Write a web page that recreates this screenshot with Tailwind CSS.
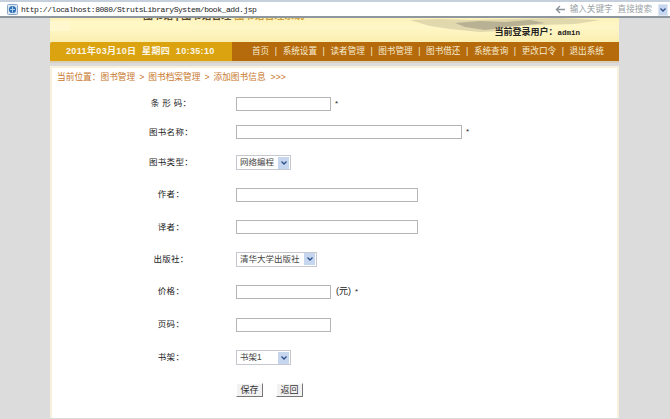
<!doctype html>
<html lang="zh">
<head>
<meta charset="UTF-8" />
<script src="https://cdn.jsdelivr.net/npm/@tailwindcss/browser@4"></script>
<title>book_add.jsp</title>
</head>
<body class="w-[670px] h-[419px] overflow-hidden bg-[#dcdcdc] font-['Liberation_Sans','Noto_Sans_CJK_SC',sans-serif] text-[8px] text-[#222]">
    <!-- address bar -->
    <div class="h-[18px] flex items-center pt-[1px] bg-white border-t-2 border-t-[#c5d0dc] border-b-2 border-b-[#8e979e]">
        <svg class="ml-[7px] w-[11px] h-[11px]" viewBox="0 0 11 11">
            <rect x="0.5" y="0.5" width="10" height="10" rx="1" fill="#dbe7f5" stroke="#8aa5c8"/>
            <circle cx="5.5" cy="5.5" r="3.6" fill="#2f6fb5"/>
            <path d="M3 5.5h5M5.5 2.5v6" stroke="#a9d0ee" stroke-width="1"/>
        </svg>
        <span class="ml-[3px] font-['Liberation_Mono',monospace] text-[8px] text-[#222] tracking-[-0.44px]">http://localhost:8080/StrutsLibrarySystem/book_add.jsp</span>
        <svg class="ml-auto w-[10px] h-[9px]" viewBox="0 0 10 9" fill="none" stroke="#8c949c" stroke-width="1.4">
            <path d="M5 1 1.5 4.5 5 8M1.5 4.5H10"/>
        </svg>
        <span class="ml-[5px] text-[8.6px] text-[#999fa6]">输入关键字</span>
        <span class="ml-[5px] text-[8.6px] text-[#999fa6]">直接搜索</span>
        <span class="ml-[6px] mr-[2px] w-[10px] h-[12px] bg-[#c5d6ee] border border-[#dfe7f2] flex items-center justify-center">
            <svg class="w-[6px] h-[4px]" viewBox="0 0 6 4" fill="none" stroke="#2d4f8a" stroke-width="1.3"><path d="M.5.5 3 3 5.5.5"/></svg>
        </span>
    </div>

    <div class="mx-[50px] w-[569px]">
        <!-- banner -->
        <div class="relative h-[24px] overflow-hidden bg-[linear-gradient(180deg,#fdf3bd_0%,#fef6c6_40%,#fbeeb0_100%)]">
            <div class="absolute left-0 top-[3px] w-[20px] h-[10px] bg-[#fff8cf]"></div>
            <div class="absolute left-[20px] top-[3px] w-[120px] h-[7px] bg-[#fff7c4]"></div>
            <svg class="absolute left-[360px] top-0 w-[209px] h-[20px]" viewBox="0 0 209 20">
                <path d="M0 2 30 1 60 2 100 1 150 0 190 2 165 6 130 7 95 8 90 13 70 14 40 11 20 8Z" fill="#cfc4a0" opacity="0.6"/>
                <path d="M45 5 70 3 95 4 120 2 135 5 100 9 75 12 55 9Z" fill="#8f8a78" opacity="0.5"/>
            </svg>
            <div class="absolute left-[93px] top-[-7px] text-[10px] leading-[10px] font-bold text-[#5a4a2a] whitespace-nowrap">图书馆 | 图书馆管理 <span class="text-[#cfa03c]">图书馆管理系统</span></div>
            <div class="absolute right-[39px] top-[8px] text-[9px] font-bold text-[#222] whitespace-nowrap">当前登录用户：<span class="font-['Liberation_Mono',monospace] text-[7.5px]">admin</span></div>
        </div>
        <!-- nav -->
        <div class="h-[21px] flex text-[#f7ecd0] border-b-2 border-b-[#d8d0bd]">
            <div class="w-[182px] bg-[#daa30f] rounded-tl-[2px] pl-[16px] flex items-center text-[9px] font-bold text-white/90 tracking-[0.35px] whitespace-nowrap">2011年03月10日&nbsp; 星期四&nbsp; 10:35:10</div>
            <div class="flex-1 bg-[#b56a0c] pl-[20px] flex items-center gap-[5.6px] text-[8.6px] whitespace-nowrap">
                <span>首页</span><span>|</span><span>系统设置</span><span>|</span><span>读者管理</span><span>|</span><span>图书管理</span><span>|</span><span>图书借还</span><span>|</span><span>系统查询</span><span>|</span><span>更改口令</span><span>|</span><span>退出系统</span>
            </div>
        </div>
        <!-- content -->
        <div class="mt-[3px] h-[352px] bg-white border-l-2 border-r-2 border-t-2 border-[#f7f0dc] pt-[3px]">
            <div class="h-[14px] pl-[5px] flex items-center gap-[4px] text-[8.7px] text-[#c9772c]">
                <span>当前位置：图书管理</span><span>&gt;</span><span>图书档案管理</span><span>&gt;</span><span>添加图书信息</span><span class="ml-[1px]">&gt;&gt;&gt;</span>
            </div>
            <div class="pt-[5px] flex flex-col">
                <div class="h-[27px] flex items-center">
                    <div class="w-[98px] ml-[70px] text-center text-[8.5px] tracking-[0.3px]">条 形 码：</div>
                    <input class="ml-[16px] w-[95px] h-[14px] bg-white border border-[#b5b5b5]" /><span class="ml-[4px]">*</span>
                </div>
                <div class="h-[30px] flex items-center">
                    <div class="w-[98px] ml-[70px] text-center text-[8.5px] tracking-[0.3px]">图书名称：</div>
                    <input class="ml-[16px] w-[226px] h-[14px] bg-white border border-[#b5b5b5]" /><span class="ml-[4px]">*</span>
                </div>
                <div class="h-[31px] flex items-center">
                    <div class="w-[98px] ml-[70px] text-center text-[8.5px] tracking-[0.3px]">图书类型：</div>
                    <div class="ml-[16px] w-[55px] h-[15px] flex items-center justify-between bg-white border border-[#c5c9cf] pl-[3px] pr-[1px]">
                        <span class="text-[8.5px] text-[#444] whitespace-nowrap">网络编程</span>
                        <span class="w-[11px] h-[12px] bg-[#c5d6ee] flex items-center justify-center"><svg class="w-[6px] h-[4px]" viewBox="0 0 6 4" fill="none" stroke="#2d4f8a" stroke-width="1.3"><path d="M.5.5 3 3 5.5.5"/></svg></span>
                    </div>
                </div>
                <div class="h-[33px] flex items-center">
                    <div class="w-[98px] ml-[70px] text-center text-[8.5px] tracking-[0.3px]">作者：</div>
                    <input class="ml-[16px] w-[182px] h-[14px] bg-white border border-[#b5b5b5]" />
                </div>
                <div class="h-[32px] flex items-center">
                    <div class="w-[98px] ml-[70px] text-center text-[8.5px] tracking-[0.3px]">译者：</div>
                    <input class="ml-[16px] w-[182px] h-[14px] bg-white border border-[#b5b5b5]" />
                </div>
                <div class="h-[32px] flex items-center">
                    <div class="w-[98px] ml-[70px] text-center text-[8.5px] tracking-[0.3px]">出版社：</div>
                    <div class="ml-[16px] w-[81px] h-[15px] flex items-center justify-between bg-white border border-[#c5c9cf] pl-[3px] pr-[1px]">
                        <span class="text-[8.5px] text-[#444] whitespace-nowrap">清华大学出版社</span>
                        <span class="w-[11px] h-[12px] bg-[#c5d6ee] flex items-center justify-center"><svg class="w-[6px] h-[4px]" viewBox="0 0 6 4" fill="none" stroke="#2d4f8a" stroke-width="1.3"><path d="M.5.5 3 3 5.5.5"/></svg></span>
                    </div>
                </div>
                <div class="h-[33px] flex items-center">
                    <div class="w-[98px] ml-[70px] text-center text-[8.5px] tracking-[0.3px]">价格：</div>
                    <input class="ml-[16px] w-[95px] h-[14px] bg-white border border-[#b5b5b5]" /><span class="ml-[5px] text-[9px]">(元)</span><span class="ml-[4px]">*</span>
                </div>
                <div class="h-[33px] flex items-center">
                    <div class="w-[98px] ml-[70px] text-center text-[8.5px] tracking-[0.3px]">页码：</div>
                    <input class="ml-[16px] w-[95px] h-[14px] bg-white border border-[#b5b5b5]" />
                </div>
                <div class="h-[33px] flex items-center">
                    <div class="w-[98px] ml-[70px] text-center text-[8.5px] tracking-[0.3px]">书架：</div>
                    <div class="ml-[16px] w-[55px] h-[15px] flex items-center justify-between bg-white border border-[#c5c9cf] pl-[3px] pr-[1px]">
                        <span class="text-[8.5px] text-[#444]">书架1</span>
                        <span class="w-[11px] h-[12px] bg-[#c5d6ee] flex items-center justify-center"><svg class="w-[6px] h-[4px]" viewBox="0 0 6 4" fill="none" stroke="#2d4f8a" stroke-width="1.3"><path d="M.5.5 3 3 5.5.5"/></svg></span>
                    </div>
                </div>
                <div class="h-[32px] flex items-center pl-[184px] gap-[13px]">
                    <button class="w-[27px] h-[14px] bg-[#f2f2f2] border-r border-b border-r-[#777] border-b-[#777] border-t border-l border-t-white border-l-white leading-none text-[9px] text-[#333]">保存</button>
                    <button class="w-[27px] h-[14px] bg-[#f2f2f2] border-r border-b border-r-[#777] border-b-[#777] border-t border-l border-t-white border-l-white leading-none text-[9px] text-[#333]">返回</button>
                </div>
            </div>
        </div>
    </div>
</body>
</html>
